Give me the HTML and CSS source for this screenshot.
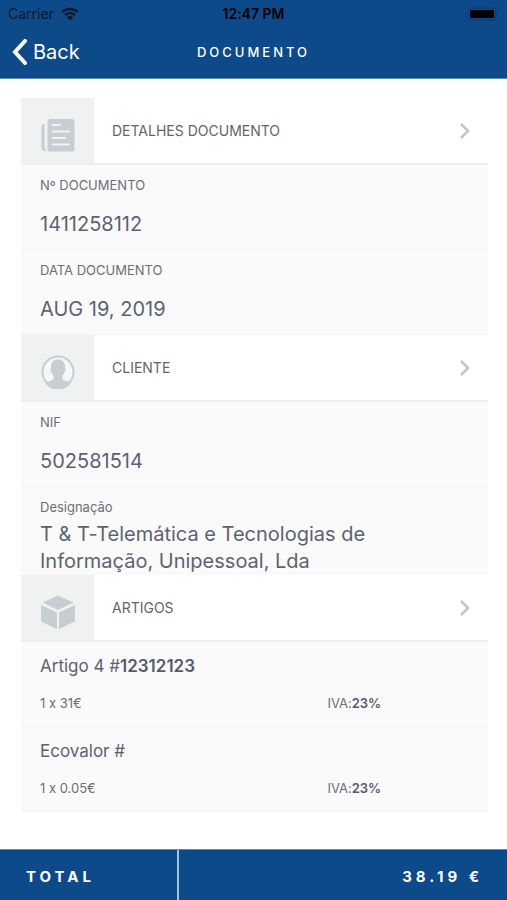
FILE: index.html
```html
<!DOCTYPE html>
<html lang="pt">

  <head>
    <meta charset="UTF-8" />
    <meta name="viewport" content="width=device-width, initial-scale=1" />
    <title>Documento</title>

    <!-- CSS Styling -->
    <link rel="stylesheet" href="styles.css">
  </head>

  <body>

  <header class="top">
    <div class="status">
      <div class="carrier">
        Carrier
        <svg class="wifi" viewBox="0 0 18 14" aria-hidden="true">
          <path d="M1.2 5.2a11 11 0 0 1 15.6 0M4 8.2a7 7 0 0 1 10 0" fill="none" stroke="currentColor" stroke-width="2.4"/>
          <path d="M9 13.6L5.8 10.4a4.6 4.6 0 0 1 6.4 0z" fill="currentColor"/>
        </svg>
      </div>
      <div class="clock">12:47 PM</div>
      <div class="battery">
        <svg viewBox="0 0 32 14" aria-hidden="true">
          <rect x="1" y="1" width="28" height="12" rx="3" fill="none" stroke="#0a3a70"/>
          <rect x="3" y="3" width="24" height="8" rx="1" fill="#000000"/>
          <path d="M30.5 5v4q1.5-2 0-4z" fill="#0a3a70"/>
        </svg>
      </div>
    </div>
    <nav class="nav">
      <a class="back" href="#">
        <svg viewBox="0 0 15 26" aria-hidden="true">
          <path d="M13 2L3 13l10 11" fill="none" stroke="currentColor" stroke-width="4" stroke-linecap="round"/>
        </svg>
        Back
      </a>
      <h1>DOCUMENTO</h1>
    </nav>
  </header>

  <main class="content">

    <section>
      <h2>
        <a class="section-head" href="#">
          <span class="tile">
            <svg viewBox="0 0 34 34" aria-hidden="true">
              <path d="M3.5 6v23q0 2.500 2 4H4q-3.500 0-3.500-4V8q0-2 3-2z" fill="currentColor"/>
              <path fill-rule="evenodd" fill="currentColor" d="M9 1h22q2.500 0 2.500 3v27q0 2.500-2.500 2.500H9q-2.500 0-2.500-3V4q0-3 2.500-3zM11 6v2h9V6zM11 12.500v2h18v-2zM11 19v2h14v-2zM11 25.500v2h18v-2z"/>
            </svg>
          </span>
          <span class="section-title">DETALHES DOCUMENTO</span>
          <svg class="chevron" viewBox="0 0 12 18" aria-hidden="true"><path d="M2 2l7 7-7 7"/></svg>
        </a>
      </h2>
      <dl class="rows">
        <div class="row">
          <dt>Nº DOCUMENTO</dt>
          <dd>1411258112</dd>
        </div>
        <div class="row">
          <dt>DATA DOCUMENTO</dt>
          <dd>AUG 19, 2019</dd>
        </div>
      </dl>
    </section>

    <section>
      <h2>
        <a class="section-head" href="#">
          <span class="tile">
            <svg viewBox="0 0 34 34" aria-hidden="true">
              <circle cx="17" cy="17" r="15.5" fill="#f5f7f7" stroke="currentColor" stroke-width="2"/>
              <path fill="currentColor" d="M17 4.500c4.500 0 7 2.500 7 7.500 0 1 1 2 .5 3.500-.3 1-1 1.500-1.500 2-.3 1.500-1 2.500-1.500 3.500v3c1 2 6 2 8.500 4a16 16 0 0 1-26 0c2.500-2 7.500-2 8.500-4v-3c-.5-1-1.200-2-1.500-3.500-.5-.5-1.200-1-1.500-2-.5-1.500.5-2.500.5-3.500 0-5 2.500-7.500 7-7.500z"/>
            </svg>
          </span>
          <span class="section-title">CLIENTE</span>
          <svg class="chevron" viewBox="0 0 12 18" aria-hidden="true"><path d="M2 2l7 7-7 7"/></svg>
        </a>
      </h2>
      <dl class="rows">
        <div class="row">
          <dt>NIF</dt>
          <dd>502581514</dd>
        </div>
        <div class="row row-long">
          <dt>Designação</dt>
          <dd>T &amp; T-Telemática e Tecnologias de Informação, Unipessoal, Lda</dd>
        </div>
      </dl>
    </section>

    <section>
      <h2>
        <a class="section-head" href="#">
          <span class="tile">
            <svg viewBox="0 0 34 34" aria-hidden="true">
              <path fill="currentColor" d="M17 0.500L32.500 7.500 17 15 1.500 7.500zM0 10l16 7.500V34L0 26.500zM34 10l-16 7.500V34l16-7.500z"/>
            </svg>
          </span>
          <span class="section-title">ARTIGOS</span>
          <svg class="chevron" viewBox="0 0 12 18" aria-hidden="true"><path d="M2 2l7 7-7 7"/></svg>
        </a>
      </h2>
      <ul class="rows">
        <li class="item">
          <div class="item-name">Artigo 4 #<b>12312123</b></div>
          <div class="item-info">
            <span>1 x 31€</span>
            <span>IVA:<b>23%</b></span>
          </div>
        </li>
        <li class="item">
          <div class="item-name">Ecovalor #</div>
          <div class="item-info">
            <span>1 x 0.05€</span>
            <span>IVA:<b>23%</b></span>
          </div>
        </li>
      </ul>
    </section>

  </main>

  <footer class="total">
    <div class="total-label">TOTAL</div>
    <div class="total-value">38.19 €</div>
  </footer>

  </body>
</html>
```
FILE: styles.css
```css
* {
  box-sizing: border-box;
}

body {
  display: flex;
  flex-direction: column;
  min-height: 100vh;
  margin: 0;
  background: #ffffff;
  color: #5c6370;
  font-family: Inter, Roboto, sans-serif;
  font-variant-ligatures: no-contextual;
}

h1, h2, dl, dd, ul {
  margin: 0;
  padding: 0;
  font-weight: normal;
}

a {
  color: inherit;
  text-decoration: none;
}

svg {
  display: block;
}

.top {
  background: #0d4a8a;
  color: #ffffff;
  border-bottom: 1px solid #5f8ab5;
}

.status, .nav {
  display: grid;
  grid-template-columns: 1fr auto 1fr;
  align-items: center;
}

.status {
  height: 27px;
  padding: 0 8px;
  color: #06182d;
  font-size: 14px;
}

.carrier {
  display: flex;
  align-items: center;
  gap: 7px;
}

.wifi {
  width: 18px;
  height: 14px;
}

.clock {
  color: #000000;
  font-weight: 600;
}

.battery svg {
  width: 32px;
  height: 14px;
  margin-left: auto;
}

.nav {
  height: 51px;
  padding: 0 12px 2px;
}

.back {
  display: flex;
  align-items: center;
  gap: 6px;
  font-size: 20px;
}

.back svg {
  width: 15px;
  height: 26px;
}

h1 {
  font-size: 13px;
  font-weight: 500;
  letter-spacing: 3px;
}

.content {
  flex: 1;
  padding: 19px 19px 18px 21px;
}

.section-head {
  display: flex;
  align-items: center;
  height: 67px;
  padding-right: 17px;
  border-bottom: 2px solid #eeefef;
  color: #62666b;
  font-size: 14px;
}

.tile {
  align-self: stretch;
  display: flex;
  align-items: center;
  justify-content: center;
  width: 73px;
  padding-top: 8px;
  background: #f0f2f2;
  color: #c7ced1;
}

.tile svg {
  width: 34px;
  height: 34px;
}

.section-title {
  flex: 1;
  padding-left: 18px;
}

.chevron {
  width: 12px;
  height: 18px;
  fill: none;
  stroke: #c4c4c6;
  stroke-width: 2.5;
}

.rows {
  background: #fafafb;
  list-style: none;
}

.row, .item {
  padding: 11px 19px;
  border-bottom: 1px solid #f2f3f4;
}

dt {
  margin-bottom: 17px;
  color: #6a6f76;
  font-size: 13px;
  line-height: 18px;
}

dd {
  font-size: 20px;
  line-height: 27px;
}

.row-long {
  padding-bottom: 0;
  border-bottom: 0;
}

.row-long dt {
  margin-bottom: 5px;
}

.row-long dd {
  max-width: 360px;
}

.item {
  padding-bottom: 14px;
}

.item-name {
  margin-bottom: 15px;
  font-size: 17px;
  line-height: 26px;
}

.item-info {
  display: grid;
  grid-template-columns: 67% 33%;
  color: #6a6f76;
  font-size: 13px;
  line-height: 18px;
}

b {
  color: #555b6b;
  font-weight: 600;
}

.total {
  display: flex;
  border-top: 1px solid #5f8ab5;
  background: #0d4a8a;
  color: #ffffff;
  font-size: 15px;
  font-weight: 700;
  letter-spacing: 4px;
}

.total-label, .total-value {
  padding: 15px 24px 11px 26px;
  line-height: 24px;
}

.total-label {
  width: 35%;
  min-width: 179px;
  border-right: 2px solid #a9c2dc;
}

.total-value {
  flex: 1;
  text-align: right;
}
```
